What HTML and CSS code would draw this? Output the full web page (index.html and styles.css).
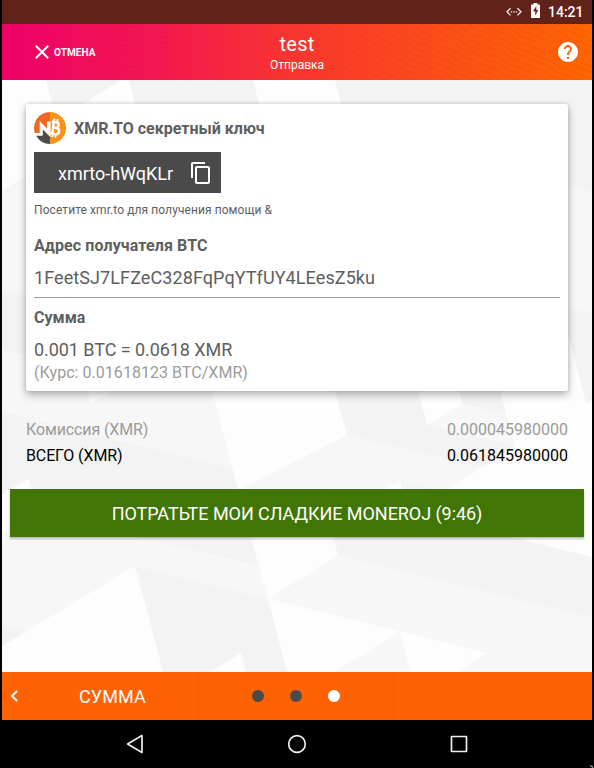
FILE: index.html
```html
<!DOCTYPE html>
<html lang="ru">
<head>
<meta charset="utf-8">
<title>Отправка</title>
<link rel="stylesheet" href="styles.css">
</head>
<body>
<div class="device">
  <div class="status">
    <svg width="16" height="10" viewBox="0 0 16 10" fill="none" stroke="#f3eae9" stroke-width="1.3"><path d="M4.5 1.2 1 4.8l3.5 3.6M11.5 1.2 15 4.8l-3.5 3.6"/><path d="M4.8 4.8h1.4M7.3 4.8h1.4M9.8 4.8h1.4"/></svg>
    <svg class="battery" width="9" height="15" viewBox="0 0 9 15"><path fill="#fff" d="M2.5 0h4v1.4H9V15H0V1.400h2.500z"/><path fill="#61221a" d="M5.300 3 2 8.300h2.200V12.500L7.300 7H5.300z"/></svg>
    <span class="clock">14:21</span>
  </div>

  <header class="toolbar">
    <svg class="waves" width="590" height="56" viewBox="0 0 590 56">
      <defs>
        <pattern id="wave" width="64" height="5" patternUnits="userSpaceOnUse" patternTransform="rotate(9)">
          <path d="M0 2q8-1 16 .5t16 .5 16-1 16 0" fill="none" stroke="#a51b35" stroke-opacity=".16"/>
        </pattern>
        <pattern id="wave2" width="46" height="6" patternUnits="userSpaceOnUse" patternTransform="rotate(24)">
          <path d="M0 3q7-2 13 0t10 1 10-1 13 0" fill="none" stroke="#b62b18" stroke-opacity=".17"/>
        </pattern>
      </defs>
      <path d="M0 0h170l-12 56H0z" fill="url(#wave)"/>
      <path d="M170 0h420v56H158z" fill="url(#wave2)"/>
    </svg>
    <div class="cancel">
      <svg width="14" height="14" viewBox="0 0 14 14" stroke="#fff" stroke-width="2"><path d="m.8.8 12.400 12.400M13.200.8.8 13.200"/></svg>
      <span>ОТМЕНА</span>
    </div>
    <div class="titles"><h1>test</h1><p>Отправка</p></div>
    <svg class="help" width="24" height="24" viewBox="0 0 24 24"><path fill="#fff" d="M12 2C6.480 2 2 6.480 2 12s4.480 10 10 10 10-4.480 10-10S17.520 2 12 2zm1 17h-2v-2h2v2zm2.070-7.750-.9.920C13.450 12.900 13 13.500 13 15h-2v-.5c0-1.100.45-2.100 1.170-2.830l1.240-1.260c.37-.36.590-.86.590-1.410 0-1.100-.9-2-2-2s-2 .9-2 2H8c0-2.210 1.790-4 4-4s4 1.790 4 4c0 .88-.36 1.680-.93 2.250z"/></svg>
  </header>

  <main class="content">
    <svg class="facets" width="590" height="592" viewBox="2 80 590 592">
      <g fill="#f3f3f3">
        <path d="M46 80H121L84 103 84 120H56zM129 80H253L263 120H139zM335 80H592V192L568 186 345 120z"/>
        <path d="M2 290 30 297V356L2 350zM568 308 592 313V400L586 403 568 334z"/>
      </g>
      <path fill="#f7f7f7" d="M2 190 30 175V297L2 290zM568 186 592 192V313L568 308z"/>
      <path fill="#f7f7f7" d="M2 350 30 356V380H209L268 599 287 672H2z"/>
      <path fill="#f3f3f3" d="M2 412 232 468 258 565 150 540 10 515V533L39 515 29 479 2 494z"/>
      <path fill="#f3f3f3" d="M135 566 268 599 287 672H163zM2 625 27 631 2 646z"/>
      <path fill="#fdfdfd" d="M2 494 29 479 39 515 2 533zM2 646 135 566 163 672H2zM85 380 91 403 131 380z"/>
      <path fill="#fdfdfd" d="M210 672 241 653 246 672z" class="facet-low"/>
      <path fill="#f7f7f7" d="M347 435 480 468 448 489H240z"/>
      <path fill="#f3f3f3" d="M332 380H416L427 425 515 445 480 468 347 435z"/>
      <path fill="#f3f3f3" d="M457 380H498L506 415 462 404z"/>
      <path fill="#f7f7f7" d="M427 425 462 404 506 415 515 445z"/>
      <path fill="#fdfdfd" d="M415 380 427 425 462 404 456 380zM385 489 400 480 403 489z"/>
      <path fill="#f3f3f3" d="M400 480 435 489H403z"/>
      <path fill="#f7f7f7" d="M268 599 338 555 592 618V672H457L487 653z"/>
      <path fill="#f3f3f3" d="M330 525H463L592 557V618L338 555z"/>
      <path fill="#fdfdfd" d="M268 599 487 653 457 672H410L400 631 335 672H287z"/>
      <path fill="#f7f7f7" d="M400 631 410 672H335z"/>
    </svg>

    <section class="card">
      <div class="service">
        <svg width="32" height="32" viewBox="0 0 32 32">
          <path fill="#f26822" d="M16 0A16 16 0 0 0 1 21.500L16 25z"/>
          <path fill="#4c4c4c" d="M2 23.500H8.500V17L16 24.500V32A16 16 0 0 1 2 23.500z"/>
          <path fill="#f7931a" d="M16 0a16 16 0 0 1 0 32z"/>
          <path fill="#fff" d="M.9 21H5.700V9L13 16.500V9.500H16.500V25.300L8.800 17.500V23.500H2z"/>
          <g transform="rotate(7 20.500 16)" fill="none" stroke="#fff" stroke-width="2.500"><path d="M17 10.200h4.300c3.900 0 3.900 5.300 0 5.300h-2M19 15.500h3c4.600 0 4.600 6.500 0 6.500h-5M19 9.500v12.500"/><path stroke-width="1.800" d="M19.300 6.800v3M22.500 6.800v3M19.300 22.300v3M22.500 22.300v3"/></g>
        </svg>
        <h2>XMR.TO секретный ключ</h2>
      </div>
      <div class="key"><span>xmrto-hWqKLr</span>
        <svg width="24" height="24" viewBox="0 0 24 24"><path fill="#fff" d="M16 1H4c-1.100 0-2 .9-2 2v14h2V3h12V1zm3 4H8c-1.100 0-2 .9-2 2v14c0 1.100.9 2 2 2h11c1.100 0 2-.9 2-2V7c0-1.100-.9-2-2-2zm0 16H8V7h11v14z"/></svg>
      </div>
      <p class="hint">Посетите xmr.to для получения помощи &amp;</p>
      <h2 class="label recipient">Адрес получателя BTC</h2>
      <p class="value address">1FeetSJ7LFZeC328FqPqYTfUY4LEesZ5ku</p>
      <h2 class="label amount">Сумма</h2>
      <p class="value sum">0.001 BTC = 0.0618 XMR</p>
      <p class="rate">(Курс: 0.01618123 BTC/XMR)</p>
    </section>

    <div class="totals">
      <div class="row fee"><span class="name">Комиссия (XMR)</span><span>0.000045980000</span></div>
      <div class="row"><span class="name">ВСЕГО (XMR)</span><span>0.061845980000</span></div>
    </div>
    <button class="send">ПОТРАТЬТЕ МОИ СЛАДКИЕ MONEROJ (9:46)</button>
  </main>

  <nav class="pager">
    <div class="previous">
      <svg width="8" height="12" viewBox="0 0 8 12" fill="none" stroke="#fff" stroke-width="2"><path d="M7 1 2 6l5 5"/></svg>
      <span>СУММА</span>
    </div>
    <div class="dots"><i></i><i></i><i class="current"></i></div>
    <div class="next"></div>
  </nav>

  <footer class="system">
    <svg width="18" height="20" viewBox="0 0 18 20" fill="none" stroke="#eee" stroke-width="1.700" stroke-linejoin="round"><path d="M16 1.600v16.800L1.600 10z"/></svg>
    <svg width="20" height="20" viewBox="0 0 20 20" fill="none" stroke="#eee" stroke-width="1.700"><circle cx="10" cy="10" r="8.300"/></svg>
    <svg width="18" height="18" viewBox="0 0 18 18" fill="none" stroke="#eee" stroke-width="1.700"><rect x="1.500" y="1.500" width="15" height="15" rx=".5"/></svg>
  </footer>
  <svg class="pointer" width="4" height="4" viewBox="0 0 4 4"><path d="M0 1 3 2.500V4L0 2z" fill="#bbb"/></svg>
</div>
</body>
</html>
```
FILE: styles.css
```css
* { box-sizing: border-box; }
body { margin: 0; background: #000; font-family: Roboto, sans-serif; color: #5e5e5e; }
h1, h2, p { margin: 0; }
svg { display: block; flex: none; }
.device { position: relative; width: 594px; height: 768px; padding: 0 2px; display: flex; flex-direction: column; overflow: hidden; }

.status { height: 24px; background: #61221a; display: flex; align-items: center; justify-content: flex-end; padding-right: 8px; color: #fff; }
.battery { margin: -3px 8px 0 9px; }
.clock { font-size: 14px; font-weight: 500; line-height: 24px; width: 36px; white-space: nowrap; }

.toolbar { position: relative; height: 56px; background: linear-gradient(90deg, #f0006b 0%, #f5174f 27%, #fa362f 50%, #ff6600 100%); color: #fff; display: grid; grid-template-columns: 1fr auto 1fr; align-items: center; }
.waves { position: absolute; inset: 0; }
.cancel, .titles, .help { position: relative; }
.cancel { display: flex; align-items: center; gap: 5px; padding-left: 33px; font-size: 10px; font-weight: 700; letter-spacing: .1px; }
.titles { text-align: center; }
.titles h1 { font-size: 20px; font-weight: 400; line-height: 24px; letter-spacing: .2px; }
.titles p { font-size: 12px; line-height: 16px; padding-top: 1px; }
.help { justify-self: end; margin-right: 12px; }

.content { position: relative; height: 592px; background: #fdfdfd; padding-top: 24px; }
.facets { position: absolute; inset: 0; }
.card { position: relative; margin: 0 24px; height: 287px; padding: 8px; background: #fff; border-radius: 2px; box-shadow: 0 4px 9px rgba(0,0,0,.27), 0 0 4px rgba(0,0,0,.16); }
.service { display: flex; align-items: center; gap: 8px; height: 32px; }
h2 { font-size: 16px; font-weight: 700; line-height: 20px; }
.service h2 { padding-top: 2px; }
.key { display: flex; align-items: center; width: 187px; height: 41px; margin-top: 8px; padding: 0 8px 0 24px; justify-content: space-between; background: #4a4a4a; color: #fff; font-size: 18px; }
.key span { padding-top: 2px; }
.hint { font-size: 12px; line-height: 16px; margin-top: 9px; letter-spacing: .08px; }
.label { margin-top: 17px; line-height: 22px; }
.recipient { letter-spacing: .1px; }
.value { font-size: 18px; line-height: 22px; margin-top: 10px; }
.address { border-bottom: 1px solid #9b9b9b; padding-bottom: 8px; letter-spacing: .09px; }
.amount { margin-top: 9px; }
.sum { letter-spacing: -.06px; }
.rate { color: #9b9b9b; font-size: 16px; line-height: 22px; margin-top: 1px; letter-spacing: .04px; }

.totals { position: relative; padding: 26px 24px 0; color: #000; font-size: 16px; }
.row { display: flex; justify-content: space-between; line-height: 26px; }
.name { letter-spacing: -.12px; }
.fee { color: #9b9b9b; }
.send { position: relative; display: block; width: 574px; height: 48px; margin: 20px 8px 0; padding: 0; border: 0; background: #417505; color: #fff; font: 400 18px Roboto, sans-serif; letter-spacing: -.05px; box-shadow: 0 2px 2px rgba(0,0,0,.25); }

.pager { height: 48px; background: #ff6105; color: #fff; display: grid; grid-template-columns: 197px 195px 1fr; }
.previous, .dots { border-right: 1px solid #f65c07; display: flex; align-items: center; }
.previous { padding-left: 8px; font-size: 18px; }
.previous span { flex: 1; padding: 2px 0 0 61px; line-height: 46px; letter-spacing: .1px; }
.dots { justify-content: center; gap: 26px; }
.dots i { width: 12px; height: 12px; border-radius: 50%; background: #4a4a4a; }
.dots .current { background: #fff; }
.system { height: 48px; display: flex; justify-content: space-between; align-items: center; padding: 0 124px; }
.pointer { position: absolute; right: 0; bottom: 0; }
```
